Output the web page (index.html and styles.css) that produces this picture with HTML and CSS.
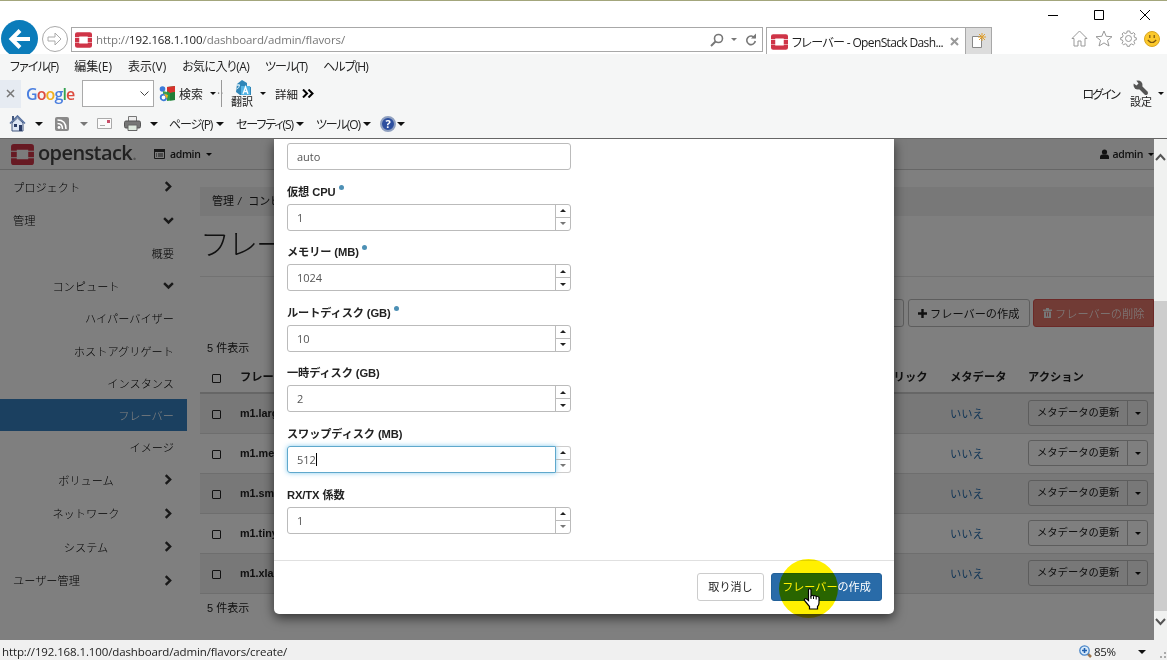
FILE: index.html
```
<!DOCTYPE html>
<html lang="ja">

<head>
    <meta charset="UTF-8">
    <meta name="viewport" content="width=device-width, initial-scale=1.0">
    <title>フレーバー - OpenStack Dashboard</title>
    <link rel="stylesheet" href="styles.css">
</head>

<body>
    <svg class="defs" width="0" height="0">
        <symbol id="os" viewBox="0 0 24 22">
            <path fill="#cf3447" d="M3 0h18q3 0 3 3v4h-6V6H6v1H0V3q0-3 3-3zM0 8h6v6H0zM18 8h6v6h-6zM0 15h6v1h12v-1h6v4q0 3-3 3H3q-3 0-3-3z" />
        </symbol>
        <symbol id="right" viewBox="0 0 10 10">
            <path d="M2.5 1l4 4-4 4" fill="none" stroke="#333" stroke-width="2.2" />
        </symbol>
        <symbol id="down" viewBox="0 0 10 10">
            <path d="M1 2.8l4 4 4-4" fill="none" stroke="#333" stroke-width="2.2" />
        </symbol>
    </svg>

    <div class="browser">
        <!-- title bar -->
        <div class="titlebar">
            <svg width="12" height="12"><path d="M1 6.5h10" stroke="#000" /></svg>
            <svg width="12" height="12"><path d="M1.5 1.5h9v9h-9z" fill="none" stroke="#000" /></svg>
            <svg width="12" height="12"><path d="M1 1l10 10M11 1L1 11" stroke="#000" /></svg>
        </div>

        <!-- address bar -->
        <div class="navrow">
            <div class="back">
                <svg width="24" height="24"><path d="M22 12H4M12 3.5L3.5 12l8.500 8.500" fill="none" stroke="#fff" stroke-width="4" /></svg>
            </div>
            <div class="forward">
                <svg width="16" height="16"><path d="M1 6h7V2l6 6-6 6v-4H1z" fill="none" stroke="#aaa" /></svg>
            </div>
            <div class="address">
                <svg width="17" height="16"><use href="#os" /></svg>
                <span class="url">http://<b>192.168.1.100</b>/dashboard/admin/flavors/</span>
                <svg width="14" height="14"><circle cx="8.500" cy="5.500" r="4" fill="none" stroke="#777" stroke-width="1.600" /><path d="M5.500 8.500L1 13" stroke="#777" stroke-width="2" /></svg>
                <i class="caret small gray"></i>
                <svg width="12" height="13"><path d="M9.700 5A4.300 4.300 0 1 0 10.300 8" fill="none" stroke="#777" stroke-width="1.600" /><path d="M6 5.500h5V.5z" fill="#777" /></svg>
            </div>
            <div class="btab">
                <svg width="17" height="16"><use href="#os" /></svg>
                <span>フレーバー - OpenStack Dash...</span>
                <svg width="9" height="9"><path d="M1 1l7 7M8 1L1 8" stroke="#999" stroke-width="2" /></svg>
            </div>
            <div class="newtab">
                <svg width="16" height="16"><path d="M1.500 3.500h9v11h-9z" fill="#fff" stroke="#888" /><path d="M11 0v8M7 4h8M8 1l6 6M14 1L8 7" stroke="#e0a030" /></svg>
            </div>
            <div class="tools">
                <svg width="17" height="17" fill="none" stroke="#999"><path d="M1 8.500L8.500 1 16 8.500h-2V16h-4v-5H7v5H3V8.500z" /></svg>
                <svg width="18" height="17" fill="none" stroke="#999"><path d="M9 1l2.200 5.300 5.800.4-4.500 3.700 1.500 5.600-5-3.100-5 3.100 1.500-5.600L1 6.700l5.800-.4z" /></svg>
                <svg width="17" height="17" fill="none" stroke="#999"><circle cx="8.500" cy="8.500" r="3" /><path d="M7.200 1h2.600l.4 2 1.700.7 1.700-1.100 1.500 1.500L14 5.900l.7 1.600 1.600.3v2l-1.700.4-.7 1.600 1 1.600-1.600 1.500-1.600-1-1.700.7-.4 1.700H7.200l-.4-1.800-1.600-.7-1.700 1-1.500-1.500 1-1.600-.6-1.600-1.700-.4v-2l1.700-.4.7-1.700-1-1.600 1.500-1.500 1.600 1L6.800 3z" /></svg>
                <svg width="16" height="16"><circle cx="8" cy="8" r="7.500" fill="#fcc92c" stroke="#d9a520" /><path d="M5.800 4v3M10.200 4v3M3.800 9q4.200 5 8.400 0" fill="none" stroke="#7a5510" stroke-width="1.200" /></svg>
            </div>
        </div>

        <!-- menu bar -->
        <div class="menubar">
            <span class="kana">ファイル(F)</span><span>編集(E)</span><span>表示(V)</span><span class="mixed">お気に入り(A)</span><span class="kana">ツール(T)</span><span class="kana">ヘルプ(H)</span>
        </div>

        <!-- google toolbar -->
        <div class="googlebar">
            <span class="gclose"><svg width="9" height="9"><path d="M1 1l7 7M8 1L1 8" stroke="#777" stroke-width="1.500" /></svg></span>
            <span class="google"><i class="b">G</i><i class="r">o</i><i class="y">o</i><i class="b">g</i><i class="g">l</i><i class="r">e</i></span>
            <span class="gbox"><svg width="9" height="6"><path d="M.5.500l4 4 4-4" fill="none" stroke="#444" /></svg></span>
            <svg class="gicon" width="17" height="17"><path d="M8 2l8-1v14l-8 1z" fill="#2d9a47" /><path d="M8 2l8-1v6l-5 1-3-2z" fill="#d7322c" /><path d="M11 8l5-1v8l-5 .6z" fill="#1f7c36" /><circle cx="3.500" cy="4" r="2.800" fill="#3c7bd9" /><path d="M4 6l4 1v3l-4-1z" fill="#3fa055" /><circle cx="4.500" cy="12.500" r="2.800" fill="#fff" stroke="#3c7bd9" stroke-width="1.800" /><path d="M5 9l4 1-1 4z" fill="#f3b51c" /></svg>
            <span class="gsearch">検索</span>
            <i class="caret small"></i>
            <span class="dots">··</span>
            <i class="sep"></i>
            <span class="stack trans">
                <svg width="17" height="16"><path d="M3 4l5-4 5 3v3l4 1v8H6L2 12z" fill="#2f86b8" /><path d="M7 6h9v9H7z" fill="#54b4e4" /><path d="M9 14l2.500-7L14 14M10 11.500h3" fill="none" stroke="#fff" stroke-width="1.300" /><path d="M2 5h4M4 4v2M2.500 9q3-1 3-4" fill="none" stroke="#d9eef8" /></svg>
                <span>翻訳</span>
            </span>
            <i class="caret small"></i>
            <span class="more">詳細</span>
            <svg width="12" height="9"><path d="M1 .5l4 4-4 4M6.500.500l4 4-4 4" fill="none" stroke="#000" stroke-width="2" /></svg>
            <span class="login">ログイン</span>
            <span class="stack">
                <svg width="16" height="16"><path d="M5 5l8 8" stroke="#555" stroke-width="4" stroke-linecap="round" /><circle cx="5" cy="5" r="4.500" fill="#555" /><path d="M-.5 2.500l4 3 2-2-3-4z" fill="#f5f6f7" /></svg>
                <span>設定</span>
            </span>
            <i class="caret small"></i>
        </div>

        <!-- command bar -->
        <div class="cmdbar">
            <svg class="c1" width="17" height="17"><path d="M3 8v8h11V8L8.500 3z" fill="#dce6f5" stroke="#44597f" /><path d="M1 8.500L8.500 1 16 8.500" fill="none" stroke="#56709f" stroke-width="1.600" /><path d="M5 9h3v3H5zM10 10h3v6h-3z" fill="#2a3c66" /><path d="M3 1h2v4H3z" fill="#44597f" /></svg>
            <i class="caret"></i>
            <svg class="c2" width="14" height="14"><rect width="14" height="14" rx="2" fill="#8a8a8a" /><circle cx="4" cy="10.500" r="1.400" fill="#fff" /><path d="M2.500 6.500q5 0 5 5.500M2.500 3q8.500 0 8.500 9" fill="none" stroke="#fff" stroke-width="1.500" /></svg>
            <i class="caret gray"></i>
            <svg class="c3" width="15" height="11"><path d="M.5.500h14v10H.5z" fill="#fbfbfb" stroke="#aaa" /><path d="M10 2h3v3h-3z" fill="#c8506a" /><path d="M3 7.500h5" stroke="#aaa" /></svg>
            <svg class="c4" width="17" height="15"><path d="M4.500.500h8v6h-8z" fill="#eee" stroke="#777" /><rect x=".5" y="5" width="16" height="7" rx="1.500" fill="#777" stroke="#555" /><path d="M4 9h9v5.500H4z" fill="#dfeadf" stroke="#666" /></svg>
            <i class="caret"></i>
            <span class="page-menu">ページ(P)</span><i class="caret"></i>
            <span class="safe-menu">セーフティ(S)</span><i class="caret"></i>
            <span class="tool-menu">ツール(O)</span><i class="caret"></i>
            <span class="help">?</span><i class="caret"></i>
        </div>

        <div class="viewport">
            <div class="page">
                <div class="navbar">
                    <svg width="23" height="21"><use href="#os" /></svg>
                    <span class="brand">openstack<small>.</small></span>
                    <svg class="list" width="11" height="10"><path d="M.5.500h10v9H.5z" fill="none" stroke="#333" /><path d="M0 0h11v3H0z" fill="#333" /><path d="M2 5h1M4 5h5M2 7h1M4 7h5" stroke="#333" /></svg>
                    <b>admin</b><i class="caret"></i>
                    <span class="user">
                        <svg width="9" height="10"><circle cx="4.500" cy="3" r="2.600" fill="#222" /><path d="M0 10V8q0-2.500 2.500-2.500h4Q9 5.500 9 8v2z" fill="#222" /></svg>
                        <b>admin</b><i class="caret"></i>
                    </span>
                </div>

                <div class="body">
                    <ul class="sidebar">
                        <li class="top">プロジェクト<svg width="11" height="11"><use href="#right" /></svg></li>
                        <li class="top">管理<svg width="11" height="11"><use href="#down" /></svg></li>
                        <li class="leaf">概要</li>
                        <li class="group"><span>コンピュート</span><svg width="11" height="11"><use href="#down" /></svg></li>
                        <li class="leaf">ハイパーバイザー</li>
                        <li class="leaf">ホストアグリゲート</li>
                        <li class="leaf">インスタンス</li>
                        <li class="leaf active">フレーバー</li>
                        <li class="leaf">イメージ</li>
                        <li class="group"><span>ボリューム</span><svg width="11" height="11"><use href="#right" /></svg></li>
                        <li class="group"><span>ネットワーク</span><svg width="11" height="11"><use href="#right" /></svg></li>
                        <li class="group"><span>システム</span><svg width="11" height="11"><use href="#right" /></svg></li>
                        <li class="top">ユーザー管理<svg width="11" height="11"><use href="#right" /></svg></li>
                    </ul>

                    <div class="main">
                        <div class="breadcrumb">管理 <em>/</em> コンピュート</div>
                        <h1>フレーバー</h1>
                        <div class="actions">
                            <span class="filter">フィルター</span>
                            <span class="btn"><svg width="9" height="9"><path d="M4.500 0v9M0 4.500h9" stroke="#222" stroke-width="2.400" /></svg>フレーバーの作成</span>
                            <span class="btn danger"><svg width="9" height="10"><path d="M0 1.500h9v1.500H0zM3 0h3v1.500H3zM1 3.500h7V10H1z" fill="#eee" /><path d="M3.500 4.500v4M5.500 4.500v4" stroke="#d9534f" stroke-width=".8" /></svg>フレーバーの削除</span>
                        </div>
                        <div class="count">5 件表示</div>
                        <table>
                            <tr>
                                <th><i class="check"></i></th><th>フレーバー名</th><th>パブリック</th><th>メタデータ</th><th>アクション</th>
                            </tr>
                            <tr>
                                <td><i class="check"></i></td><td class="name">m1.large</td><td>はい</td><td><a>いいえ</a></td>
                                <td><span class="split"><span>メタデータの更新</span><i class="caret"></i></span></td>
                            </tr>
                            <tr>
                                <td><i class="check"></i></td><td class="name">m1.medium</td><td>はい</td><td><a>いいえ</a></td>
                                <td><span class="split"><span>メタデータの更新</span><i class="caret"></i></span></td>
                            </tr>
                            <tr>
                                <td><i class="check"></i></td><td class="name">m1.small</td><td>はい</td><td><a>いいえ</a></td>
                                <td><span class="split"><span>メタデータの更新</span><i class="caret"></i></span></td>
                            </tr>
                            <tr>
                                <td><i class="check"></i></td><td class="name">m1.tiny</td><td>はい</td><td><a>いいえ</a></td>
                                <td><span class="split"><span>メタデータの更新</span><i class="caret"></i></span></td>
                            </tr>
                            <tr>
                                <td><i class="check"></i></td><td class="name">m1.xlarge</td><td>はい</td><td><a>いいえ</a></td>
                                <td><span class="split"><span>メタデータの更新</span><i class="caret"></i></span></td>
                            </tr>
                        </table>
                        <div class="count bottom">5 件表示</div>
                    </div>
                </div>

                <!-- create flavor dialog -->
                <div class="backdrop"></div>
                <div class="modal">
                    <div class="modal-body">
                        <div class="field"><div class="input">auto</div></div>
                        <div class="field"><label>仮想 CPU <sup></sup></label><div class="input num">1<span class="spin off"><i></i><i></i></span></div></div>
                        <div class="field"><label>メモリー (MB) <sup></sup></label><div class="input num">1024<span class="spin"><i></i><i></i></span></div></div>
                        <div class="field"><label>ルートディスク (GB) <sup></sup></label><div class="input num">10<span class="spin"><i></i><i></i></span></div></div>
                        <div class="field"><label>一時ディスク (GB)</label><div class="input num">2<span class="spin"><i></i><i></i></span></div></div>
                        <div class="field"><label>スワップディスク (MB)</label><div class="input num focus">512<span class="cursor"></span><span class="spin off"><i></i><i></i></span></div></div>
                        <div class="field"><label>RX/TX 係数</label><div class="input num">1<span class="spin off"><i></i><i></i></span></div></div>
                    </div>
                    <div class="modal-footer">
                        <span class="cancel">取り消し</span>
                        <span class="submit">フレーバーの作成</span>
                    </div>
                </div>
                <div class="spot"></div>
                <svg class="hand" width="18" height="22"><path d="M5.500 1.500q1.500-1.500 2.500 0V8q1-1.500 2.500 0 1.500-1 2.700.5 1.800-.8 2.800 1V15q0 2-1.500 3.500V21h-8v-2.500L1.500 12.500q-.5-2 1.500-2l2.500 2z" fill="#fff" stroke="#000" stroke-width="1.200" /><path d="M8 8v3M10.500 8.500V11M13.200 9v2.500" stroke="#000" /></svg>
            </div>

            <div class="scrollbar">
                <svg width="13" height="16"><path d="M2 11l4.500-5 4.500 5" fill="none" stroke="#555" stroke-width="2" /></svg>
                <div class="thumb"></div>
                <svg width="13" height="29"><path d="M2 8l4.500 5L11 8" fill="none" stroke="#555" stroke-width="2" /></svg>
            </div>
        </div>

        <div class="status">
            <span class="link">http://192.168.1.100/dashboard/admin/flavors/create/</span>
            <svg width="13" height="13"><path d="M8 8l4 4" stroke="#a07850" stroke-width="2.500" /><circle cx="5.500" cy="5.500" r="4.700" fill="#d9ebfb" stroke="#4a86c8" stroke-width="1.300" /><path d="M5.500 3v5M3 5.500h5" stroke="#1f5fae" stroke-width="1.600" /></svg>
            <span class="zoom">85%</span>
            <i class="caret"></i>
            <svg class="grip" width="8" height="8" fill="#aaa"><path d="M5 0h2v2H5zM5 4h2v2H5zM1 4h2v2H1z" /></svg>
        </div>
    </div>
</body>

</html>
```
FILE: styles.css
```
* {
    box-sizing: border-box;
}

body {
    margin: 0;
    font-family: "Liberation Sans", "Noto Sans CJK JP", sans-serif;
    font-size: 12px;
    color: #222;
}

.defs {
    position: absolute;
}

svg {
    flex: none;
}

.browser {
    display: flex;
    flex-direction: column;
    width: 1167px;
    height: 660px;
    overflow: hidden;
    border-top: 1px solid #a3a67c;
    background: #f5f6f6;
    white-space: nowrap;
}

.caret {
    flex: none;
    width: 0;
    height: 0;
    border: 4px solid transparent;
    border-top-color: #111;
    border-bottom: 0;
}

.caret.gray {
    border-top-color: #777;
}

.caret.small {
    border-width: 3px 3px 0;
}

/* window chrome */
.titlebar {
    display: flex;
    justify-content: flex-end;
    gap: 34px;
    height: 26px;
    padding: 8px 16px 0 0;
    background: #fff;
}

.navrow {
    display: flex;
    height: 27px;
    background: #fff;
    font-family: "Open Sans", "Noto Sans CJK JP", sans-serif;
}

.back {
    display: flex;
    flex: none;
    align-items: center;
    justify-content: center;
    width: 37px;
    height: 37px;
    margin: -7px 0 0 1px;
    border-radius: 50%;
    background: #0b7cba;
    clip-path: inset(0 0 3px 0);
}

.forward {
    display: flex;
    flex: none;
    align-items: center;
    justify-content: center;
    width: 26px;
    height: 26px;
    margin: -1px 3px 0 4px;
    border: 1px solid #aaa;
    border-radius: 50%;
}

.address {
    display: flex;
    align-items: center;
    width: 692px;
    height: 25px;
    padding: 0 5px 0 3px;
    border: 1px solid #a8a8a8;
}

.url {
    flex: 1;
    margin-left: 4px;
    font-size: 11.500px;
    letter-spacing: -0.100px;
    color: #777;
}

.url b {
    font-weight: 400;
    color: #222;
}

.address .caret {
    margin: 0 8px 0 7px;
}

.btab {
    display: flex;
    align-items: center;
    width: 200px;
    margin-left: 3px;
    padding: 1px 6px 0 4px;
    border: 1px solid #a8a8a8;
    border-bottom: 0;
    font-size: 12px;
}

.btab span {
    flex: 1;
    margin-left: 4px;
    font-feature-settings: "palt";
    letter-spacing: -0.640px;
}

.newtab {
    display: flex;
    align-items: center;
    justify-content: center;
    width: 26px;
    border: 1px solid #a8a8a8;
    border-width: 1px 1px 0 0;
    background: #dcdcdc;
}

.tools {
    display: flex;
    flex: 1;
    align-items: center;
    justify-content: flex-end;
    gap: 7px;
    height: 23px;
    padding-right: 7px;
}

.menubar {
    display: flex;
    align-items: center;
    gap: 16px;
    height: 24px;
    padding-left: 10px;
    font-family: "Open Sans", "Noto Sans CJK JP", sans-serif;
    font-feature-settings: "palt";
}

.kana {
    letter-spacing: -0.950px;
}

.mixed {
    letter-spacing: -0.600px;
}

.googlebar {
    display: flex;
    align-items: center;
    height: 31px;
    font-family: "Open Sans", "Noto Sans CJK JP", sans-serif;
}

.gclose {
    display: flex;
    align-items: center;
    justify-content: center;
    width: 21px;
    height: 28px;
    background: #e6ebf2;
}

.google {
    width: 55px;
    margin: 0 1px 0 5px;
    font-size: 16px;
    font-weight: 600;
    letter-spacing: -0.900px;
}

.google i {
    font-style: normal;
}

.b { color: #4a7fe0; }
.r { color: #dd4b3e; }
.y { color: #f0b020; }
.g { color: #35a352; }

.gbox {
    display: flex;
    align-items: center;
    justify-content: flex-end;
    width: 72px;
    height: 27px;
    margin-right: 5px;
    padding-right: 4px;
    border: 1px solid #aaa;
    background: #fff;
}

.gsearch {
    width: 24px;
    margin: 0 7px 0 3px;
}

.dots {
    width: 5px;
    margin: 0 -1px 0 1px;
    color: #888;
}

.sep {
    width: 1px;
    height: 27px;
    margin: 0 9px 0 0;
    background: #999;
}

.stack {
    display: flex;
    flex-direction: column;
    align-items: center;
    width: 22px;
    font-size: 11px;
    line-height: 12px;
}

.trans {
    margin-right: 7px;
}

.more {
    font-size: 11.500px;
    margin: 0 4px 0 9px;
}

.login {
    margin: 0 11px 0 auto;
    font-feature-settings: "palt";
    letter-spacing: -1.800px;
}

.login ~ .caret {
    margin: 0 3px 0 6px;
}

.cmdbar {
    display: flex;
    align-items: center;
    height: 30px;
    padding-left: 9px;
    border-bottom: 1px solid #666;
    font-family: "Open Sans", "Noto Sans CJK JP", sans-serif;
    font-feature-settings: "palt";
    letter-spacing: -1.100px;
}

.c1 { margin-right: 9px; }
.c2 { margin: 0 11px 0 12px; }
.c3 { margin: 0 12px 0 9px; }
.c4 { margin-right: 9px; }

.page-menu { width: 42px; margin: 0 5px 0 11px; }
.safe-menu { width: 55px; margin: 0 5px 0 12px; }
.tool-menu { width: 43px; margin: 0 4px 0 12px; }

.help {
    width: 16px;
    height: 16px;
    margin: 0 1px 0 9px;
    border: 2px solid #8fa0c0;
    border-radius: 50%;
    background: #2d4f9f;
    color: #fff;
    font-size: 11px;
    font-weight: 700;
    line-height: 12px;
    letter-spacing: 0;
    text-align: center;
}

/* dashboard */
.viewport {
    display: flex;
    height: 501px;
}

.page {
    position: relative;
    width: 1154px;
    height: 501px;
    overflow: hidden;
    background: #fff;
}

.navbar {
    display: flex;
    align-items: center;
    height: 31px;
    padding-left: 11px;
    border-bottom: 1px solid #ccc;
    background: #f8f8f8;
    font-family: "Open Sans", sans-serif;
    font-size: 10.500px;
}

.navbar b {
    margin-top: -1px;
    font-weight: 600;
    letter-spacing: -0.350px;
}

.navbar .caret {
    border-width: 3px 3px 0;
    margin-left: 5px;
}

.brand {
    width: 98px;
    margin: -3px 0 0 4px;
    font-size: 20px;
    font-weight: 600;
    letter-spacing: -0.600px;
    color: #444;
}

.brand small {
    color: #aaa;
}

.list {
    margin: 0 5px 0 18px;
}

.user {
    display: flex;
    align-items: center;
    margin-left: auto;
}

.user b {
    margin-left: 4px;
}

.body {
    display: flex;
}

.sidebar {
    width: 187px;
    margin: 0;
    padding: 0;
    list-style: none;
    color: #000;
    font-size: 11.200px;
    font-weight: 300;
}

.sidebar li {
    display: flex;
    align-items: center;
    height: 33.400px;
    padding: 0 13px;
}

.sidebar svg {
    margin-left: auto;
}

.sidebar .leaf {
    justify-content: flex-end;
    height: 32.200px;
}

.sidebar .group span {
    width: 146px;
    text-align: center;
}

.sidebar .active {
    background: #3681c0;
    color: #fff;
}

.main {
    flex: 1;
    padding: 17px 0 0 13px;
}

.breadcrumb {
    height: 29px;
    padding-left: 12px;
    background: #f0f0f0;
    font-size: 11px;
    line-height: 29px;
}

.breadcrumb em {
    margin: 0 4px 0 1px;
}

h1 {
    height: 61px;
    margin: 0;
    border-bottom: 1px solid #e4e4e4;
    font-size: 30px;
    font-weight: 300;
    line-height: 58px;
    letter-spacing: -2px;
}

.actions {
    display: flex;
    justify-content: flex-end;
    height: 28px;
    margin: 22px 0 0;
}

.filter,
.btn {
    display: flex;
    align-items: center;
    height: 28px;
    border: 1px solid #bbb;
    border-radius: 3px;
}

.filter {
    margin-right: 4px;
    padding: 0 9px;
}

.btn {
    width: 122px;
    margin-right: 3px;
    padding-left: 9px;
    font-size: 11.200px;
}

.btn svg {
    margin-right: 3px;
}

.danger {
    width: 121px;
    margin: 0;
    border-color: #d9534f;
    border-radius: 3px 0 0 3px;
    background: #e2766a;
    color: #fff;
    font-weight: 300;
}

.count {
    height: 38px;
    padding-left: 7px;
    font-size: 11px;
    line-height: 43px;
}

.count.bottom {
    line-height: 28px;
}

table {
    width: 954px;
    table-layout: fixed;
    border-collapse: collapse;
}

th {
    height: 28px;
    padding: 4px 0 0;
    border-bottom: 2px solid #ccc;
    font-size: 11.300px;
    line-height: 17px;
    text-align: left;
    vertical-align: top;
}

th:nth-child(1) { width: 40px; }
th:nth-child(2) { width: 631px; }
th:nth-child(3) { width: 79px; }
th:nth-child(4) { width: 78px; }

td {
    height: 40px;
    padding: 0;
    border-bottom: 1px solid #ddd;
    font-size: 11.300px;
}

tr:nth-child(even) td {
    background: #f0f0f0;
}

td a {
    color: #2a6fae;
}

.name {
    font-size: 10.800px;
    font-weight: 700;
}

.check {
    display: block;
    width: 9px;
    height: 9px;
    margin-left: 12px;
    border: 1px solid #222;
    border-radius: 1px;
}

td .check {
    margin-top: 2px;
}

th .check {
    margin-top: 5px;
}

.split {
    display: flex;
    align-items: center;
    width: 120px;
    height: 26px;
    border: 1px solid #bbb;
    border-radius: 3px;
    font-size: 10.300px;
}

.split span {
    width: 99px;
    padding-left: 8px;
    border-right: 1px solid #bbb;
    line-height: 24px;
}

.split .caret {
    margin-left: 7px;
    border-width: 3px 3px 0;
}

/* dialog */
.backdrop {
    position: absolute;
    inset: 0;
    background: rgba(0, 0, 0, 0.5);
}

.modal {
    position: absolute;
    top: 0;
    left: 274px;
    width: 620px;
    height: 475px;
    border-radius: 0 0 5px 5px;
    background: #fff;
    box-shadow: 0 4px 12px rgba(0, 0, 0, 0.6);
}

.modal-body {
    height: 421px;
    padding: 4px 13px 0;
}

.field {
    width: 284px;
    margin-bottom: 13.600px;
}

label {
    display: block;
    height: 20px;
    font-size: 11.200px;
    font-weight: 700;
    line-height: 16px;
    letter-spacing: -0.100px;
}

sup {
    display: inline-block;
    width: 5px;
    height: 5px;
    border-radius: 50%;
    background: #4d90b5;
    vertical-align: 6px;
}

.input {
    display: flex;
    align-items: center;
    height: 27px;
    padding-left: 9px;
    border: 1px solid #bbb;
    border-radius: 3px;
    font-family: "Open Sans", sans-serif;
    font-size: 11px;
    line-height: 23px;
    color: #555;
}

.spin {
    display: flex;
    flex-direction: column;
    width: 15px;
    height: 100%;
    margin-left: auto;
    border-left: 1px solid #bbb;
}

.spin i {
    display: flex;
    flex: 1;
    align-items: center;
    justify-content: center;
}

.spin i + i {
    border-top: 1px solid #bbb;
}

.spin i::before {
    content: "";
    border: 3px solid transparent;
    border-top: 0;
    border-bottom-color: #222;
}

.spin i + i::before {
    border: 3px solid transparent;
    border-top-color: #222;
    border-bottom: 0;
}

.spin.off i + i::before {
    border-top-color: #777;
}

.focus {
    position: relative;
    width: 269px;
    border-color: #5fa8cc;
    border-radius: 3px 0 0 3px;
    box-shadow: 0 0 5px rgba(102, 190, 233, 0.8);
}

.focus .spin {
    position: absolute;
    top: -1px;
    left: 268px;
    height: 27px;
    border: 1px solid #ccc;
    border-left: 0;
    border-radius: 0 3px 3px 0;
}

.cursor {
    width: 1px;
    height: 13px;
    background: #000;
}

.modal-footer {
    display: flex;
    justify-content: flex-end;
    gap: 7px;
    padding: 12px 12px 0 0;
    border-top: 1px solid #e0e0e0;
    font-size: 11.100px;
    line-height: 26px;
    text-align: center;
}

.cancel {
    width: 67px;
    border: 1px solid #ccc;
    border-radius: 3px;
}

.submit {
    width: 111px;
    border: 1px solid #23619a;
    border-radius: 3px;
    background: #296ba8;
    color: #fff;
}

/* click highlight and mouse pointer */
.spot {
    position: absolute;
    top: 420px;
    left: 779px;
    width: 59px;
    height: 59px;
    border-radius: 50%;
    background: #fff000;
    mix-blend-mode: multiply;
}

.hand {
    position: absolute;
    top: 449px;
    left: 803px;
}

.scrollbar {
    display: flex;
    flex-direction: column;
    width: 13px;
    background: #f0f1f0;
}

.scrollbar svg:first-child {
    margin: 10px 0 136px;
}

.thumb {
    flex: 1;
    background: #cdcdcd;
}

.status {
    display: flex;
    align-items: center;
    height: 20px;
    padding: 3px 0 0 2px;
    background: #f0f0f0;
    font-family: "Open Sans", sans-serif;
    font-size: 11.500px;
}

.link {
    letter-spacing: -0.120px;
}

.status svg:not(.grip) {
    margin-left: auto;
}

.zoom {
    width: 24px;
    margin: 0 20px 0 2px;
    letter-spacing: -0.300px;
}

.grip {
    align-self: flex-end;
    margin-left: 13px;
}
```
